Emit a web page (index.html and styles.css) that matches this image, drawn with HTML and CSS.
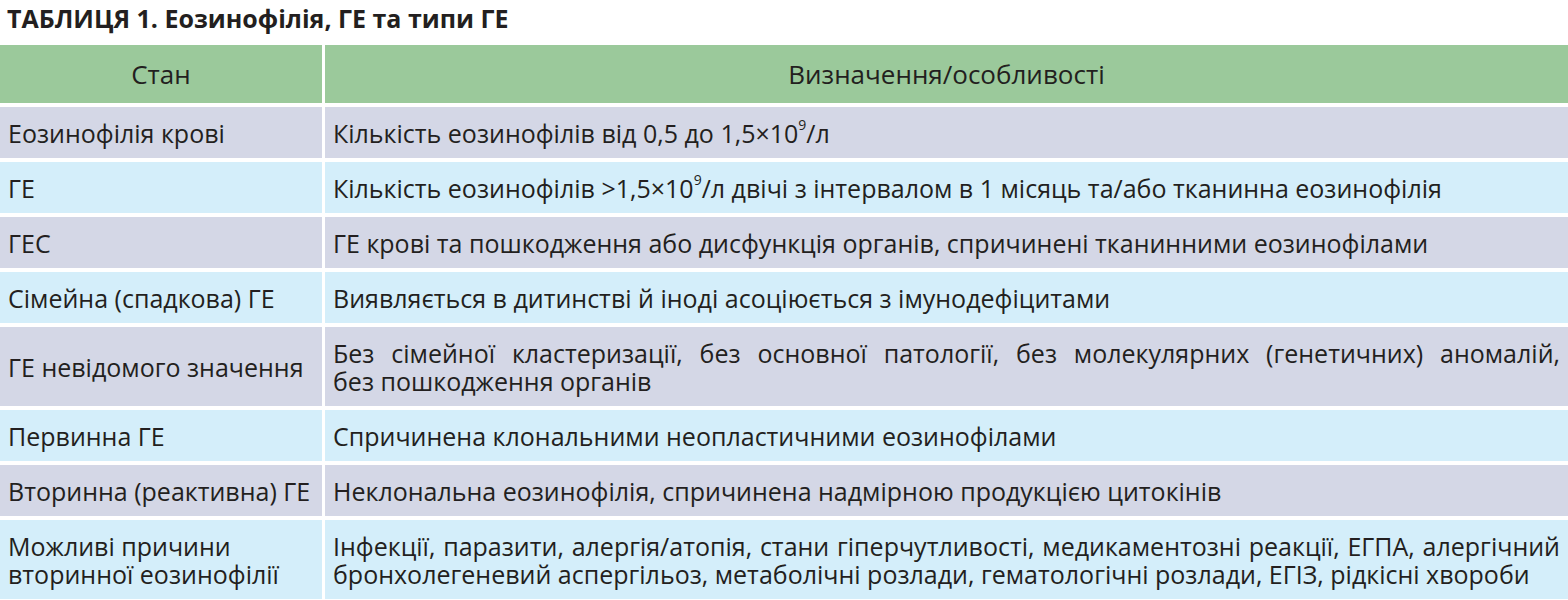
FILE: index.html
```html
<!DOCTYPE html>
<html lang="uk">
<head>
<meta charset="utf-8">
<title>Таблиця 1</title>
<link rel="stylesheet" href="styles.css">
</head>
<body>
<h1 class="title">ТАБЛИЦЯ 1. Еозинофілія, ГЕ та типи ГЕ</h1>
<div class="table">
  <div class="cell head">Стан</div>
  <div class="cell head">Визначення/особливості</div>

  <div class="cell odd">Еозинофілія крові</div>
  <div class="cell odd">Кількість еозинофілів від 0,5 до 1,5×10<sup>9</sup>/л</div>

  <div class="cell even">ГЕ</div>
  <div class="cell even">Кількість еозинофілів &gt;1,5×10<sup>9</sup>/л двічі з інтервалом в 1 місяць та/або тканинна еозинофілія</div>

  <div class="cell odd">ГЕС</div>
  <div class="cell odd">ГЕ крові та пошкодження або дисфункція органів, спричинені тканинними еозинофілами</div>

  <div class="cell even">Сімейна (спадкова) ГЕ</div>
  <div class="cell even">Виявляється в дитинстві й іноді асоціюється з імунодефіцитами</div>

  <div class="cell odd">ГЕ невідомого значення</div>
  <div class="cell odd"><p class="lines"><span class="just">Без сімейної кластеризації, без основної патології, без молекулярних (генетичних) аномалій,</span>без пошкодження органів</p></div>

  <div class="cell even">Первинна ГЕ</div>
  <div class="cell even">Спричинена клональними неопластичними еозинофілами</div>

  <div class="cell odd">Вторинна (реактивна) ГЕ</div>
  <div class="cell odd">Неклональна еозинофілія, спричинена надмірною продукцією цитокінів</div>

  <div class="cell even"><p class="lines">Можливі причини<br>вторинної еозинофілії</p></div>
  <div class="cell even"><p class="lines"><span class="just">Інфекції, паразити, алергія/атопія, стани гіперчутливості, медикаментозні реакції, ЕГПА, алергічний</span>бронхолегеневий аспергільоз, метаболічні розлади, гематологічні розлади, ЕГІЗ, рідкісні хвороби</p></div>
</div>
</body>
</html>
```

FILE: styles.css
```css
html, body {
  margin: 0;
  padding: 0;
  background: #ffffff;
}
body {
  font-family: "Open Sans", "Noto Sans", sans-serif;
  color: #231f20;
  width: 1568px;
}
.title {
  margin: 0;
  padding: 2px 0 0 7px;
  height: 42px;
  box-sizing: border-box;
  font-size: 25px;
  line-height: 32px;
  font-weight: 700;
}
.table {
  display: grid;
  grid-template-columns: 322px 1fr;
  gap: 4px 3px;
  margin-top: 3px;
  font-size: 25px;
  line-height: 28px;
}
.cell {
  padding: 11.5px 8px;
  display: flex;
  align-items: center;
}
.head {
  background: #9bc99b;
  justify-content: center;
  padding: 15px 8px;
  font-size: 26px;
}
.odd {
  background: #d4d7e6;
}
.even {
  background: #d4eefa;
}
.lines {
  margin: 0;
  flex: 1;
}
.just {
  display: block;
  text-align: justify;
  text-align-last: justify;
}
sup {
  font-size: 14px;
  line-height: 0;
  vertical-align: 0;
  position: relative;
  top: -8px;
}
```
